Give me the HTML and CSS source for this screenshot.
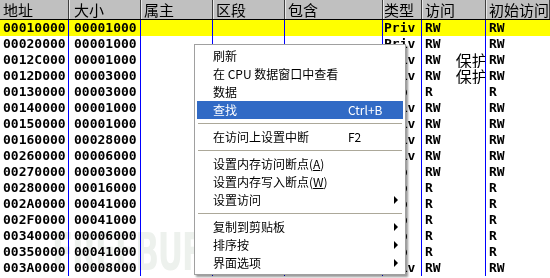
FILE: index.html
```html
<!DOCTYPE html>
<html lang="zh-CN">
<head>
  <meta charset="UTF-8">
  <title>内存映射</title>
  <link rel="stylesheet" href="styles.css">
</head>
<body>
<div class="memmap">
  <div class="row head">
    <div>地址</div><div>大小</div><div>属主</div><div>区段</div><div>包含</div><div>类型</div><div>访问</div><div>初始访问</div>
  </div>
  <div class="row sel">
    <div>00010000</div><div>00001000</div><div></div><div></div><div></div><div>Priv</div><div>RW</div><div>RW</div>
  </div>
  <div class="row">
    <div>00020000</div><div>00001000</div><div></div><div></div><div></div><div>Priv</div><div>RW</div><div>RW</div>
  </div>
  <div class="row">
    <div>0012C000</div><div>00001000</div><div></div><div></div><div></div><div>Priv</div><div>RW<span class="guard">保护</span></div><div>RW</div>
  </div>
  <div class="row">
    <div>0012D000</div><div>00003000</div><div></div><div></div><div></div><div>Priv</div><div>RW<span class="guard">保护</span></div><div>RW</div>
  </div>
  <div class="row">
    <div>00130000</div><div>00003000</div><div></div><div></div><div></div><div>Map</div><div>R</div><div>R</div>
  </div>
  <div class="row">
    <div>00140000</div><div>00001000</div><div></div><div></div><div></div><div>Priv</div><div>RW</div><div>RW</div>
  </div>
  <div class="row">
    <div>00150000</div><div>00001000</div><div></div><div></div><div></div><div>Priv</div><div>RW</div><div>RW</div>
  </div>
  <div class="row">
    <div>00160000</div><div>00028000</div><div></div><div></div><div></div><div>Priv</div><div>RW</div><div>RW</div>
  </div>
  <div class="row">
    <div>00260000</div><div>00006000</div><div></div><div></div><div></div><div>Priv</div><div>RW</div><div>RW</div>
  </div>
  <div class="row">
    <div>00270000</div><div>00003000</div><div></div><div></div><div></div><div>Map</div><div>RW</div><div>RW</div>
  </div>
  <div class="row">
    <div>00280000</div><div>00016000</div><div></div><div></div><div></div><div>Map</div><div>R</div><div>R</div>
  </div>
  <div class="row">
    <div>002A0000</div><div>00041000</div><div></div><div></div><div></div><div>Map</div><div>R</div><div>R</div>
  </div>
  <div class="row">
    <div>002F0000</div><div>00041000</div><div></div><div></div><div></div><div>Map</div><div>R</div><div>R</div>
  </div>
  <div class="row">
    <div>00340000</div><div>00006000</div><div></div><div></div><div></div><div>Map</div><div>R</div><div>R</div>
  </div>
  <div class="row">
    <div>00350000</div><div>00041000</div><div></div><div></div><div></div><div>Map</div><div>R</div><div>R</div>
  </div>
  <div class="row">
    <div>003A0000</div><div>00008000</div><div></div><div></div><div></div><div>Priv</div><div>RW</div><div>RW</div>
  </div>
</div>

<div class="watermark">FREEBUF</div>

<div class="ctx-menu">
  <div class="item"><span>刷新</span></div>
  <div class="item"><span>在 CPU 数据窗口中查看</span></div>
  <div class="item"><span>数据</span></div>
  <div class="item hover"><span>查找</span><span class="key">Ctrl+B</span></div>
  <div class="sep"></div>
  <div class="item"><span>在访问上设置中断</span><span class="key">F2</span></div>
  <div class="sep"></div>
  <div class="item"><span>设置内存访问断点(<u>A</u>)</span></div>
  <div class="item"><span>设置内存写入断点(<u>W</u>)</span></div>
  <div class="item"><span>设置访问</span><span class="key"></span><span class="arrow"></span></div>
  <div class="sep"></div>
  <div class="item"><span>复制到剪贴板</span><span class="key"></span><span class="arrow"></span></div>
  <div class="item"><span>排序按</span><span class="key"></span><span class="arrow"></span></div>
  <div class="item"><span>界面选项</span><span class="key"></span><span class="arrow"></span></div>
</div>
</body>
</html>
```

FILE: styles.css
```css
html, body {
  margin: 0;
  padding: 0;
  background: #fff;
  width: 550px;
  height: 278px;
  overflow: hidden;
}
body {
  position: relative;
  color: #000;
}
.memmap {
  position: relative;
  z-index: 1;
}
.row {
  display: grid;
  grid-template-columns: 69px 72px 72px 72px 98px 39px 64px 1fr;
  height: 16px;
  font-family: "DejaVu Sans Mono", "Liberation Mono", monospace;
  font-weight: bold;
  font-size: 13px;
  line-height: 16px;
}
.row > div {
  box-sizing: border-box;
  border-right: 1px solid #0000ff;
  padding-left: 3px;
  white-space: nowrap;
  overflow: hidden;
}
.row > div:nth-child(2) { padding-left: 5px; }
.row > div:nth-child(6) { padding-left: 1px; }
.row > div:nth-child(8) { border-right: none; }
.row.sel {
  background: #ffff00;
}
.row.head {
  height: 20px;
  background: #c0c0c0;
  border-bottom: 1px solid #000;
  box-sizing: border-box;
  font-family: "Noto Sans CJK SC", sans-serif;
  font-weight: normal;
  font-size: 15px;
  line-height: 19px;
}
.row.head > div {
  border-right: 1px solid #404040;
  box-shadow: inset 1px 0 #e8e8e8;
}
.row.head > div:first-child { box-shadow: none; }
.guard {
  margin-left: 15px;
  font-family: "Noto Sans CJK SC", sans-serif;
  font-weight: normal;
  font-size: 16px;
  line-height: 16px;
  vertical-align: top;
}
.watermark {
  position: absolute;
  left: 52px;
  top: 222px;
  z-index: 2;
  font-family: "DejaVu Sans", sans-serif;
  font-weight: bold;
  font-size: 52px;
  letter-spacing: -2px;
  color: #edf1ed;
  mix-blend-mode: darken;
  transform: scaleX(0.6);
  transform-origin: left top;
  pointer-events: none;
}
.ctx-menu {
  position: absolute;
  left: 194px;
  top: 44px;
  z-index: 3;
  width: 212px;
  box-sizing: border-box;
  background: #fff;
  border: 1px solid #a0a0a0;
  padding: 2px;
  box-shadow: 2px 2px 2px rgba(0,0,0,0.4);
  font-family: "Noto Sans CJK SC", sans-serif;
  font-size: 12px;
}
.item {
  display: grid;
  grid-template-columns: 1fr 42px 13px;
  align-items: center;
  height: 18px;
  line-height: 18px;
  padding-left: 16px;
  white-space: nowrap;
}
.item.hover {
  background: #316ac5;
  color: #fff;
}
.item u {
  text-underline-offset: 1px;
}
.arrow {
  width: 0;
  height: 0;
  margin-left: 4px;
  border-left: 4px solid #000;
  border-top: 4px solid transparent;
  border-bottom: 4px solid transparent;
}
.sep {
  height: 9px;
  box-sizing: border-box;
  margin: 0 1px;
  border-bottom: 1px solid #fff;
  background: linear-gradient(#fff 4px, #aca899 4px, #aca899 5px, #fff 5px);
}
```
